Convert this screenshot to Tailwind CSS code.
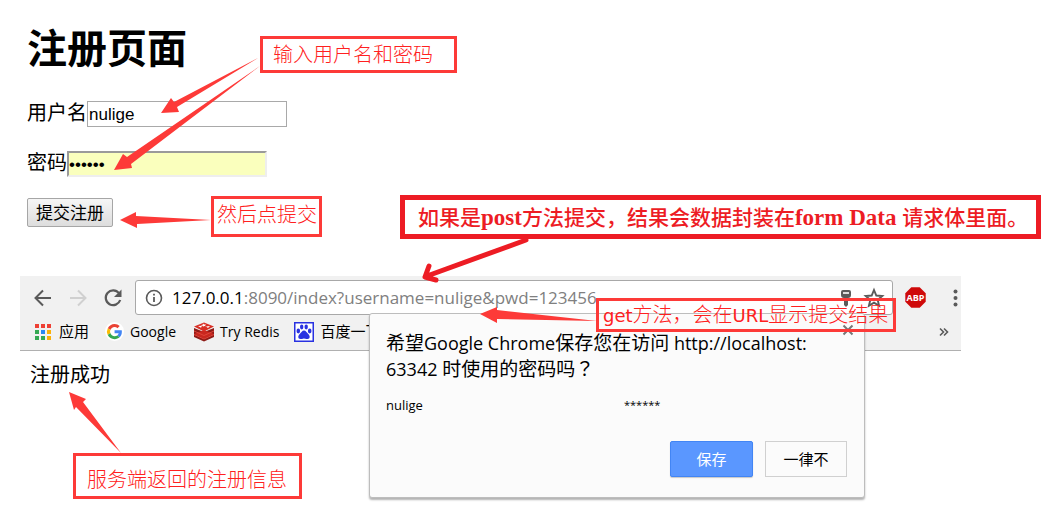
<!DOCTYPE html>
<html lang="zh-CN">
<head>
<meta charset="utf-8">
<title>注册页面</title>
<script src="https://cdn.jsdelivr.net/npm/@tailwindcss/browser@4"></script>
</head>
<body class="relative min-h-screen overflow-hidden bg-white font-['Open_Sans','Noto_Sans_CJK_SC',sans-serif] text-black">

<!-- Registration form -->
<form class="flex flex-col items-start pl-[27px] pt-[18px]" onsubmit="return false">
  <h1 class="text-[40px] leading-[60px] font-bold">注册页面</h1>
  <div class="mt-[23px] flex items-center text-[20px] leading-[27px]">
    <label for="user" class="-mt-1">用户名</label>
    <input id="user" type="text" value="nulige" class="h-[26px] w-[200px] border border-[#a9a9a9] bg-white px-px font-['Liberation_Sans',sans-serif] text-[17px]">
  </div>
  <div class="mt-6 flex items-center text-[20px] leading-[27px]">
    <label for="pwd" class="-mt-1">密码</label>
    <input id="pwd" type="password" value="123456" class="h-[26px] w-[200px] border-2 border-t-[#9a9a9a] border-l-[#9a9a9a] border-r-[#eeeeee] border-b-[#eeeeee] bg-[#faffbd] px-0 font-['Liberation_Sans',sans-serif] text-[17px]">
  </div>
  <button type="submit" class="mt-[21px] h-[29px] rounded-[2px] border border-[#a6a6a6] bg-linear-to-b from-[#f6f6f6] to-[#dddddd] px-2 text-[17px] leading-[27px]">提交注册</button>
</form>

<!-- Browser window -->
<section class="mt-[49px] ml-5 mr-[93px]">
  <header class="border-b border-[#b0b0b0] bg-[#f1f1f1] pt-1">
    <div class="flex h-[35px] items-center">
      <div class="flex w-[115px] shrink-0 items-center gap-[13px] pl-3">
        <button aria-label="后退"><svg class="block size-[22px]" viewBox="0 0 22 22" fill="none" stroke="#5a5a5a" stroke-width="2"><path d="M19 11H4M11 3.500L3.500 11L11 18.500"/></svg></button>
        <button aria-label="前进"><svg class="block size-[22px]" viewBox="0 0 22 22" fill="none" stroke="#d0d0d0" stroke-width="2"><path d="M3 11H18M11 3.500L18.500 11L11 18.500"/></svg></button>
        <button aria-label="重新加载"><svg class="block size-[22px]" viewBox="0 0 22 22"><path d="M17 6.200A7.400 7.400 0 1 0 18.200 13" fill="none" stroke="#5a5a5a" stroke-width="2.200"/><path d="M19.500 2.500V10H12Z" fill="#5a5a5a"/></svg></button>
      </div>
      <div class="flex h-[35px] min-w-0 flex-1 items-center rounded-[3px] border border-[#a8a8a8] bg-white pr-[7px] pl-[9px]">
        <svg class="size-[18px] shrink-0" viewBox="0 0 18 18"><circle cx="9" cy="9" r="7.500" fill="none" stroke="#5a5a5a" stroke-width="1.600"/><path d="M9 8V13M9 4.800V6.500" stroke="#5a5a5a" stroke-width="1.800"/></svg>
        <div class="ml-[9px] min-w-0 flex-1 text-[17px] leading-6 whitespace-nowrap">127.0.0.1<span class="text-[#808080]">:8090/index?username=nulige&amp;pwd=123456</span></div>
        <button aria-label="密码"><svg class="block size-[22px]" viewBox="0 0 22 22"><path d="M8 3H14Q16 3 16 5V8Q16 11 13 11V18L11 20L9 18V11Q6 11 6 8V5Q6 3 8 3Z" fill="#5a5a5a"/><path d="M8 6H14" stroke="#fff" stroke-width="1.600"/></svg></button>
        <button aria-label="收藏" class="ml-[6px]"><svg class="block size-[22px]" viewBox="0 0 22 22"><path d="M11 3L13.300 8.500L19.300 9L14.700 12.900L16.100 18.800L11 15.700L5.900 18.800L7.300 12.900L2.700 9L8.700 8.500Z" fill="none" stroke="#5a5a5a" stroke-width="1.900"/></svg></button>
      </div>
      <div class="flex w-[68px] shrink-0 items-center justify-between pl-3">
        <svg class="size-[21px]" viewBox="0 0 21 21" role="img" aria-label="ABP"><path d="M6.300 .3H14.700L20.700 6.300V14.700L14.700 20.700H6.300L.3 14.700V6.300Z" fill="#cf0a0a"/><text x="10.500" y="14" text-anchor="middle" font-family="Open Sans" font-weight="700" font-size="9" fill="#fff">ABP</text></svg>
        <button aria-label="菜单"><svg class="block h-[22px] w-[11px]" viewBox="0 0 11 22" fill="#5a5a5a"><circle cx="5.500" cy="4.500" r="2"/><circle cx="5.500" cy="11" r="2"/><circle cx="5.500" cy="17.500" r="2"/></svg></button>
      </div>
    </div>
    <nav class="flex h-[35px] items-center pl-[14px] pb-[2px] text-[15px] whitespace-nowrap">
      <a href="#" class="flex items-center gap-[7px]">
        <svg class="size-[18px]" viewBox="0 0 18 18"><path fill="#ee4035" d="M1 1h4v4H1zM7 1h4v4H7zM13 1h4v4h-4z"/><path fill="#35a853" d="M1 7h4v4H1z"/><path fill="#2a87f0" d="M7 7h4v4H7z"/><path fill="#fbb006" d="M13 7h4v4h-4zM13 13h4v4h-4z"/><path fill="#35a853" d="M1 13h4v4H1zM7 13h4v4H7z"/></svg>
        应用</a>
      <a href="#" class="ml-4 flex items-center gap-[6px] text-[14px]">
        <svg class="size-[19px]" viewBox="0 0 48 48"><circle cx="24" cy="24" r="24" fill="#fff"/><g transform="translate(5 5) scale(.8)"><path fill="#ea4335" d="M24 9.500c3.500 0 6.700 1.200 9.200 3.600l6.900-6.900C35.900 2.400 30.500 0 24 0 14.600 0 6.500 5.400 2.600 13.200l8 6.200C12.400 13.700 17.700 9.500 24 9.500z"/><path fill="#4285f4" d="M47 24.600c0-1.600-.2-3.100-.4-4.600H24v9h12.900c-.6 3-2.300 5.500-4.800 7.200l7.700 6C44.400 38 47 31.800 47 24.600z"/><path fill="#fbbc05" d="M10.500 28.600a14.500 14.500 0 0 1 0-9.200l-8-6.200a24 24 0 0 0 0 21.600z"/><path fill="#34a853" d="M24 48c6.500 0 11.900-2.100 15.900-5.800l-7.700-6c-2.200 1.500-4.900 2.300-8.200 2.300-6.300 0-11.600-4.200-13.500-9.900l-8 6.200C6.500 42.600 14.600 48 24 48z"/></g></svg>
        Google</a>
      <a href="#" class="ml-[18px] flex items-center gap-[6px] text-[14px]">
        <svg class="size-5" viewBox="0 0 20 20"><path fill="#8e1b16" d="M0 6L10 10L20 6V15L10 19.500L0 15Z"/><path fill="#c9281f" d="M0 12L10 8L20 12L10 16.500Z"/><path d="M0 12.500L10 17L20 12.500M0 9L10 13.500L20 9" fill="none" stroke="#e0453b"/><path fill="#d92f25" d="M0 4.500L10 .5L20 4.500L10 9.500Z"/><path fill="#fff" d="M9 1.500l1 1 2-.2-1 1 1 1-2-.3-1 .7-.3-1-2-.2 1.800-.6zM4 4l4-.2-1 2zM12 4.500l4-.5-2 2z"/></svg>
        Try Redis</a>
      <a href="#" class="ml-[15px] flex items-center gap-[6px]">
        <svg class="size-5" viewBox="0 0 20 20"><path d="M.75 .75H19.250V19.250H.75Z" fill="#fff" stroke="#2932e1" stroke-width="1.500"/><g fill="#2932e1"><ellipse cx="4.300" cy="9" rx="1.800" ry="2.400"/><ellipse cx="7.700" cy="5" rx="1.700" ry="2.400"/><ellipse cx="12.200" cy="5" rx="1.700" ry="2.400"/><ellipse cx="15.700" cy="9" rx="1.800" ry="2.400"/><path d="M10 8.500C12 8.500 12.500 10.500 14.300 12S16.500 17 13.500 17 11 16.500 10 16.500 9.500 17 6.500 17 3.900 13.500 5.700 12 8 8.500 10 8.500Z"/></g></svg>
        百度一下</a>
      <button aria-label="更多书签" class="ml-auto mr-3"><svg class="block h-3 w-[10px]" viewBox="0 0 10 12" fill="none" stroke="#5a5a5a" stroke-width="1.600"><path d="M1 2.500L4.500 6L1 9.500M5 2.500L8.500 6L5 9.500"/></svg></button>
    </nav>
  </header>
  <p class="pt-[9px] pl-[10px] text-[20px] leading-[30px]">注册成功</p>
</section>

<!-- Save-password dialog, floating over the browser window -->
<div role="dialog" aria-labelledby="ask" class="absolute top-[313px] left-[369px] flex w-[496px] flex-col rounded-[3px] border border-[#bdbdbd] bg-[#fbfbfb] px-4 pt-4 pb-5 shadow-[0_2px_2px_rgba(0,0,0,0.3)]">
  <button aria-label="关闭" class="absolute top-[10px] right-[10px]"><svg class="block size-3" viewBox="0 0 12 12" stroke="#777" stroke-width="2"><path d="M1.500 1.500L10.500 10.500M10.500 1.500L1.500 10.500"/></svg></button>
  <h2 id="ask" class="text-[19px] leading-[26px]">希望<span class="text-[18px]">Google Chrome</span>保存您在访问<span class="text-[18px]"> http://localhost:</span><br><span class="text-[18px]">63342 </span>时使用的密码吗<span lang="zh-TW" class="font-['Noto_Sans_CJK_TC',sans-serif] leading-none">？</span></h2>
  <div class="mt-[13px] grid grid-cols-[238px_1fr] text-[13px] leading-5"><span>nulige</span><span class="text-[11px]">******</span></div>
  <div class="mt-[26px] flex justify-end gap-3 pr-px text-[15px]">
    <button class="h-[36px] w-[83px] rounded-[2px] border border-[#4285f4] bg-[#5a97ff] text-white shadow-[0_1px_1px_rgba(0,0,0,0.2)]">保存</button>
    <button class="h-[36px] w-[82px] border border-[#d0d0d0] bg-[#fbfbfb]">一律不</button>
  </div>
</div>

<!-- Annotation arrows -->
<svg class="pointer-events-none absolute top-0 left-0 h-[517px] w-[1054px]" viewBox="0 0 1054 517" fill="#fd3a38" aria-hidden="true">
  <path d="M161 113L171 98L174 102L258 58L177 107L179 112Z"/>
  <path d="M114 170L123 154L127 157L260 66L131 164L132 168Z"/>
  <path d="M120 220L136 212V216L211 220L137 224V228Z"/>
  <path d="M480 314L497 307V310L597 321L497 319V323Z"/>
  <path d="M69 392L86 399L83 402L121 453L76 407L74 410Z"/>
  <path d="M526 240L427 276M429 266L425 277L436 280" fill="none" stroke="#ed1c24" stroke-width="5" stroke-linecap="round" stroke-linejoin="round"/>
</svg>

<!-- Annotation labels -->
<div class="absolute top-9 left-[260px] h-[37px] w-[197px] border-3 border-[#fd3a38] pl-[10px] text-[20px] leading-[31px] font-light whitespace-nowrap text-[#ff2020]">输入用户名和密码</div>
<div class="absolute top-[196px] left-[211px] h-[41px] w-[111px] border-3 border-[#fd3a38] pl-[3px] text-[20px] leading-[31px] font-light whitespace-nowrap text-[#ff2020]">然后点提交</div>
<div class="absolute top-[195px] left-[400px] h-[44px] w-[641px] border-5 border-[#ed1c24] pl-[13px] font-['Liberation_Serif','Noto_Sans_CJK_SC',serif] text-[21px] leading-[36px] font-medium whitespace-nowrap text-[#ed1c24]">如果是<span class="text-[23px] font-bold">post</span>方法提交，结果会数据封装在<span class="text-[23px] font-bold">form Data </span>请求体里面。</div>
<div class="absolute top-[298px] left-[596px] h-[34px] w-[300px] border-3 border-[#fd3a38] pl-1 font-['DejaVu_Sans','Noto_Sans_CJK_SC',sans-serif] text-[20px] leading-[28px] font-light whitespace-nowrap text-[#ff2020]"><span class="text-[18px] font-normal">get</span>方法，会在<span class="text-[18px] font-normal">URL</span>显示提交结果</div>
<div class="absolute top-[453px] left-[73px] h-[46px] w-[229px] border-3 border-[#fd3a38] pl-[11px] text-[20px] leading-[48px] font-light whitespace-nowrap text-[#ff2020]">服务端返回的注册信息</div>
</body>
</html>
